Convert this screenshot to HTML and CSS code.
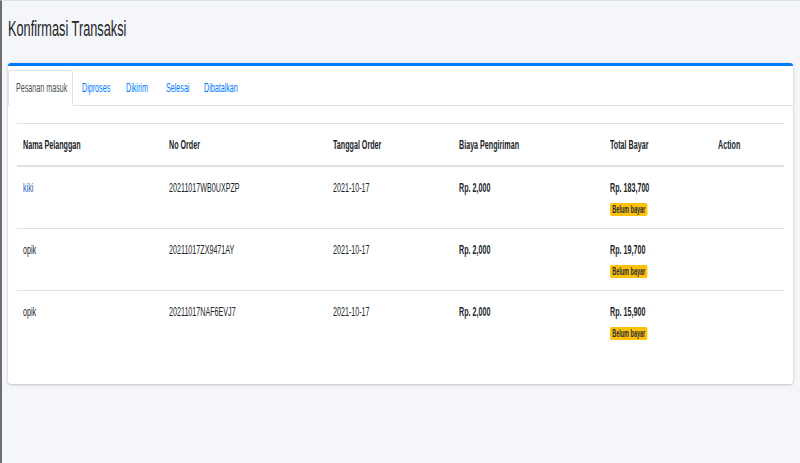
FILE: index.html
```html
<!DOCTYPE html>
<html>
<head>
<meta charset="utf-8">
<link rel="stylesheet" href="styles.css">
</head>
<body>
<div class="wrapper">
  <h1 class="page-title"><span class="sq">Konfirmasi Transaksi</span></h1>
  <div class="card">
    <div class="card-header">
      <ul class="tabs">
        <li class="tab t1 active"><span class="sq">Pesanan masuk</span></li>
        <li class="tab t2"><span class="sq">Diproses</span></li>
        <li class="tab t3"><span class="sq">Dikirim</span></li>
        <li class="tab t4"><span class="sq">Selesai</span></li>
        <li class="tab t5"><span class="sq">Dibatalkan</span></li>
      </ul>
    </div>
    <div class="card-body">
      <table class="tbl">
        <colgroup>
          <col class="c1"><col class="c2"><col class="c3"><col class="c4"><col class="c5"><col class="c6">
        </colgroup>
        <thead>
          <tr>
            <th><span class="sq">Nama Pelanggan</span></th>
            <th><span class="sq">No Order</span></th>
            <th><span class="sq">Tanggal Order</span></th>
            <th><span class="sq">Biaya Pengiriman</span></th>
            <th><span class="sq">Total Bayar</span></th>
            <th><span class="sq">Action</span></th>
          </tr>
        </thead>
        <tbody>
          <tr>
            <td><span class="sq link">kiki</span></td>
            <td><span class="sq">20211017WB0UXPZP</span></td>
            <td><span class="sq">2021-10-17</span></td>
            <td><span class="sq b">Rp. 2,000</span></td>
            <td><div class="stack"><span class="sq b">Rp. 183,700</span><span class="badge">Belum bayar</span></div></td>
            <td></td>
          </tr>
          <tr>
            <td><span class="sq">opik</span></td>
            <td><span class="sq">20211017ZX9471AY</span></td>
            <td><span class="sq">2021-10-17</span></td>
            <td><span class="sq b">Rp. 2,000</span></td>
            <td><div class="stack"><span class="sq b">Rp. 19,700</span><span class="badge">Belum bayar</span></div></td>
            <td></td>
          </tr>
          <tr>
            <td><span class="sq">opik</span></td>
            <td><span class="sq">20211017NAF6EVJ7</span></td>
            <td><span class="sq">2021-10-17</span></td>
            <td><span class="sq b">Rp. 2,000</span></td>
            <td><div class="stack"><span class="sq b">Rp. 15,900</span><span class="badge">Belum bayar</span></div></td>
            <td></td>
          </tr>
        </tbody>
      </table>
    </div>
  </div>
</div>
</body>
</html>
```
FILE: styles.css
```css
* { box-sizing: border-box; }
html, body { margin: 0; padding: 0; height: 100%; }
body {
  background: #f4f6f9;
  font-family: "Liberation Sans", Arial, sans-serif;
  color: #212529;
  font-size: 13px;
  border-left: 2px solid #6b6f73;
  border-top: 1px solid #dcdfe3;
}
.sq {
  display: inline-block;
  white-space: nowrap;
  transform: scaleX(0.55);
  transform-origin: 0 50%;
}
.wrapper { padding: 13px 7px 0 6px; }
.page-title {
  margin: 0 0 19px 0;
  font-weight: 400;
  font-size: 22px;
  line-height: 30px;
  color: #1f2529;
}
.page-title .sq { transform: scaleX(0.58); }
.card {
  background: #fff;
  border-top: 3px solid #007bff;
  border-radius: 3px;
  box-shadow: 0 0 1px rgba(0,0,0,.125), 0 1px 3px rgba(0,0,0,.2);
}
.card-header {
  padding: 4px 0 0 0;
  border-bottom: 1px solid #dee2e6;
}
.tabs { list-style: none; margin: 0 0 -1px 0; padding: 0; display: flex; }
.tab {
  height: 36px;
  line-height: 34px;
  padding-left: 8px;
  color: #007bff;
  border: 1px solid transparent;
  border-radius: 3px 3px 0 0;
  overflow: hidden;
}
.t1 { width: 65px; }
.t2 { width: 44px; }
.t3 { width: 40px; }
.t4 { width: 38px; }
.t5 { width: 60px; }
.tab.active {
  color: #495057;
  background: #fff;
  border-color: #dee2e6 #dee2e6 #fff;
  padding-left: 7px;
}
.card-body { padding: 17px 9px 32px 9px; }
.tbl { width: 100%; border-collapse: collapse; table-layout: fixed; }
.c1 { width: 146px; } .c2 { width: 164px; } .c3 { width: 126px; }
.c4 { width: 151px; } .c5 { width: 108px; } .c6 { width: auto; }
.tbl th, .tbl td {
  text-align: left;
  vertical-align: top;
  line-height: 18px;
  border-top: 1px solid #dee2e6;
}
.tbl th { font-weight: 700; border-bottom: 2px solid #dee2e6; padding: 12px 6px 11px; }
.tbl td { padding: 12px 6px 12px; }
.stack { display: flex; flex-direction: column; align-items: flex-start; }
.b { font-weight: 700; }
.link { color: #2f5bb8; }
.badge {
  display: block;
  margin-top: 6px;
  height: 13px;
  background: #ffc107;
  color: #1f2d3d;
  font-size: 10px;
  font-weight: 700;
  line-height: 13px;
  padding: 0 4px;
  border-radius: 3px;
  white-space: nowrap;
  transform: scaleX(0.55);
  transform-origin: 0 50%;
}
```
